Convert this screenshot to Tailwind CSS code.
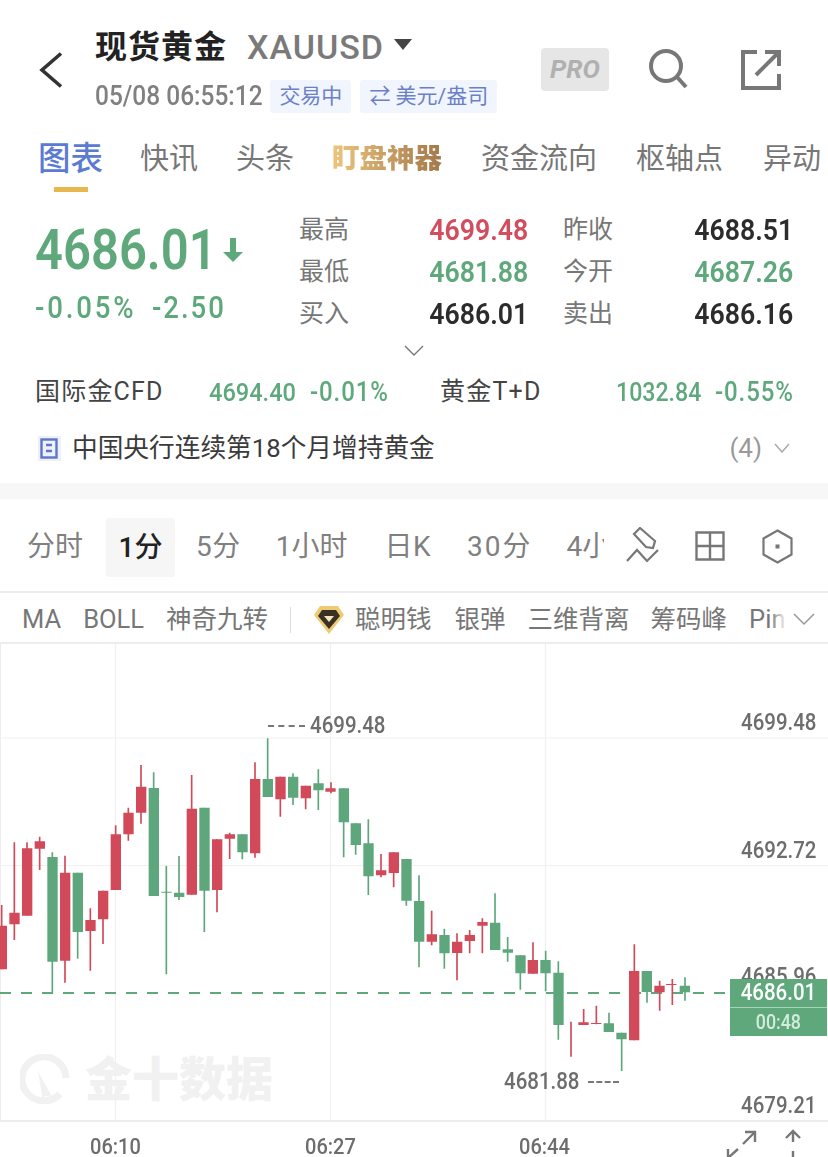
<!DOCTYPE html>
<html lang="zh"><head><meta charset="utf-8">
<script src="https://cdn.jsdelivr.net/npm/@tailwindcss/browser@4"></script>
</head>
<body class="bg-white">
<div class="relative w-[828px] h-[1157px] overflow-hidden bg-white text-[#777] font-['Roboto','Noto_Sans_CJK_SC',sans-serif]">

<!-- header -->
<header class="relative flex h-[125px] pl-[38px] pr-[47px]">
  <svg class="mt-[52px] w-[26px] h-[36px] shrink-0" viewBox="0 0 26 36" fill="none" stroke="#333" stroke-width="3.6"><path d="M23 1.5 4 18l19 16.5"/></svg>
  <div class="ml-[31px] pt-[27px]">
    <div class="flex items-center h-[40px]">
      <span class="text-[32px] leading-none font-bold text-[#222] tracking-[1px]">现货黄金</span>
      <span class="ml-[20px] text-[34px] leading-none font-medium text-[#7a7a7a] tracking-[1px]">XAUUSD</span>
      <svg class="ml-[10px] w-[18px] h-[11px] mb-[5px]" viewBox="0 0 18 11"><path d="M0 0h18L9 11z" fill="#444"/></svg>
    </div>
    <div class="flex items-center mt-[12px] h-[34px]">
      <span class="inline-block origin-left scale-x-[.89] -mr-[21px] text-[27.500px] leading-none font-medium text-[#808080]">05/08 06:55:12</span>
      <span class="ml-[8px] px-[9px] h-[33px] leading-[33px] rounded-[3px] bg-[#f1f5fd] text-[#6b80c9] text-[21px]">交易中</span>
      <span class="ml-[9px] px-[9px] h-[33px] leading-[33px] rounded-[3px] bg-[#f1f5fd] text-[#6b80c9] text-[21px] whitespace-nowrap">⇄ 美元/盎司</span>
    </div>
  </div>
  <div class="ml-auto pt-[48px] flex items-start">
    <div class="w-[68px] h-[43px] rounded-[4px] bg-[#e6e6e6] text-[#b0b0b0] text-[26px] leading-[43px] font-bold italic text-center">PRO</div>
    <svg class="ml-[40px] mt-[1px] w-[40px] h-[40px]" viewBox="0 0 40 40" fill="none" stroke="#777" stroke-width="4"><circle cx="17" cy="17" r="15"/><path d="m28 28 9 10"/></svg>
    <svg class="ml-[52px] mt-[2px] w-[40px] h-[40px]" viewBox="0 0 40 40" fill="none" stroke="#777" stroke-width="4"><path d="M16 2H2v36h36V24M15 25 37 3M24 2h14v14"/></svg>
  </div>
</header>

<!-- tabs -->
<nav class="relative flex items-center h-[68px] pl-[38px] text-[29px] leading-none whitespace-nowrap overflow-hidden">
  <span class="text-[32.500px] font-medium text-[#5b7bd3]">图表</span>
  <span class="ml-[37px]">快讯</span>
  <span class="ml-[38px]">头条</span>
  <span class="ml-[38px] font-black bg-gradient-to-r from-[#ecc67d] to-[#a3784b] bg-clip-text text-transparent text-[27.500px]">盯盘神器</span>
  <span class="ml-[39px]">资金流向</span>
  <span class="ml-[39px]">枢轴点</span>
  <span class="ml-[40px]">异动</span>
  <span class="absolute left-[54px] top-[62px] w-[34px] h-[5px] bg-[#e8b84f]"></span>
</nav>

<!-- quote -->
<section class="relative flex h-[178px] pl-[35px] pr-[35px] pt-[16px]">
  <div class="w-[264px] pt-[11px] text-[#5ea87c]">
    <div class="flex items-center h-[60px]">
      <span class="inline-block origin-left scale-x-[.89] -mr-[22px] text-[55px] leading-none font-semibold">4686.01</span>
      <svg class="ml-[5px] w-[22px] h-[24px]" viewBox="0 0 22 24"><path d="M8 0h6v14h7L11 24 1 14h7z" fill="#5ea87c"/></svg>
    </div>
    <div class="mt-[12px] text-[31px] leading-none font-medium whitespace-nowrap">
      <span class="inline-block origin-left scale-x-[.89] tracking-[3.200px] -mr-[17px]">-0.05%</span><span class="inline-block origin-left scale-x-[.89] tracking-[2.200px] ml-[20px]">-2.50</span>
    </div>
  </div>
  <div class="grid grid-cols-[100px_129px_90px_175px] grid-rows-[42px_42px_42px] items-center text-[25px] w-[494px] h-[126px]">
    <span>最高</span><span class="justify-self-end inline-block origin-right scale-x-[.89] font-semibold text-[30px] leading-none text-[#d24d5e]">4699.48</span>
    <span class="pl-[35px] whitespace-nowrap">昨收</span><span class="justify-self-end inline-block origin-right scale-x-[.89] font-semibold text-[30px] leading-none text-[#2c2c2c]">4688.51</span>
    <span>最低</span><span class="justify-self-end inline-block origin-right scale-x-[.89] font-semibold text-[30px] leading-none text-[#5ea87c]">4681.88</span>
    <span class="pl-[35px] whitespace-nowrap">今开</span><span class="justify-self-end inline-block origin-right scale-x-[.89] font-semibold text-[30px] leading-none text-[#5ea87c]">4687.26</span>
    <span>买入</span><span class="justify-self-end inline-block origin-right scale-x-[.89] font-semibold text-[30px] leading-none text-[#2c2c2c]">4686.01</span>
    <span class="pl-[35px] whitespace-nowrap">卖出</span><span class="justify-self-end inline-block origin-right scale-x-[.89] font-semibold text-[30px] leading-none text-[#2c2c2c]">4686.16</span>
  </div>
  <svg class="absolute left-[404px] top-[152px] w-[20px] h-[11px]" viewBox="0 0 20 11" fill="none" stroke="#777" stroke-width="1.4"><path d="m1 1 9 9 9-9"/></svg>
</section>

<!-- related -->
<section class="flex items-center h-[50px] -mt-[4px] pl-[35px] whitespace-nowrap">
  <span class="w-[174px] text-[25px] text-[#444] tracking-[1.200px]">国际金CFD</span>
  <span class="w-[101px]"><span class="inline-block origin-left scale-x-[.89] text-[#5ea87c] text-[26.500px] font-medium">4694.40</span></span>
  <span class="w-[130px]"><span class="inline-block origin-left scale-x-[.89] text-[#5ea87c] text-[27px] font-medium tracking-[1px]">-0.01%</span></span>
  <span class="w-[176px] text-[25px] text-[#444] tracking-[1.200px]">黄金T+D</span>
  <span class="w-[99px]"><span class="inline-block origin-left scale-x-[.89] text-[#5ea87c] text-[26px] font-medium">1032.84</span></span>
  <span><span class="inline-block origin-left scale-x-[.89] text-[#5ea87c] text-[27px] font-medium tracking-[1px]">-0.55%</span></span>
</section>

<!-- news -->
<section class="flex items-center h-[50px] mt-[6px] pl-[38px] pr-[38px] whitespace-nowrap">
  <svg class="w-[23px] h-[25px]" viewBox="0 0 23 25"><rect width="23" height="25" fill="#eef1fb"/><rect x="3.5" y="3.5" width="15" height="18" fill="none" stroke="#5c76c9" stroke-width="2.4"/><path d="M8 9h6M8 15h6" stroke="#5c76c9" stroke-width="2.6"/></svg>
  <span class="ml-[11px] text-[25.700px] text-[#3b3b3b]">中国央行连续第18个月增持黄金</span>
  <span class="ml-auto text-[26px] text-[#999]">(4)</span>
  <svg class="ml-[12px] w-[16px] h-[10px]" viewBox="0 0 16 10" fill="none" stroke="#aaa" stroke-width="1.5"><path d="m1 1 7 8 7-8"/></svg>
</section>

<div class="h-[16px] mt-[10px] bg-[#f7f7f7]"></div>

<!-- periods -->
<section class="relative flex items-center h-[94px] pt-[4px] border-b-2 border-[#ededed] pl-[27px] text-[28px] text-[#808080] whitespace-nowrap">
  <span>分时</span>
  <span class="ml-[23px] w-[69px] h-[59px] leading-[59px] text-center rounded-[3px] bg-[#f6f6f6] text-[#222] font-medium">1分</span>
  <span class="ml-[21px] tracking-[.5px]">5分</span>
  <span class="ml-[35px]">1小时</span>
  <span class="ml-[37px] tracking-[.5px]">日K</span>
  <span class="ml-[36px] tracking-[2px]">30分</span>
  <span class="ml-[34px] w-[37px] overflow-hidden">4小时</span>
  <svg class="absolute left-[626px] top-[28px] w-[34px] h-[37px]" viewBox="0 0 34 37" fill="none" stroke="#777" stroke-width="2.2"><path d="m14 1 15 13-2 7-7-1L8 7zM1 34l10-11 10 11 11-11"/></svg>
  <svg class="absolute left-[695px] top-[32px] w-[30px] h-[30px]" viewBox="0 0 30 30" fill="none" stroke="#777" stroke-width="2.4"><path d="M1.500 1.500h27v27h-27zM15 1.500v27M1.500 15h27"/></svg>
  <svg class="absolute left-[762px] top-[30px] w-[31px] h-[35px]" viewBox="0 0 31 35" fill="none" stroke="#777" stroke-width="2.200"><path d="M15.500 1.500 29.500 9.500v16l-14 8-14-8v-16z"/><rect x="13.500" y="15.500" width="4" height="4" fill="#777" stroke="none"/></svg>
</section>

<!-- indicators -->
<section class="relative flex items-center h-[51px] pt-[4px] border-b-2 border-[#ededed] pl-[22px] text-[25.500px] text-[#777] whitespace-nowrap overflow-hidden">
  <span>MA</span>
  <span class="ml-[22px]">BOLL</span>
  <span class="ml-[22px]">神奇九转</span>
  <span class="ml-[22px] w-px h-[26px] bg-[#ddd]"></span>
  <svg class="ml-[22px] w-[32px] h-[30px] shrink-0" viewBox="0 0 32 30"><path d="M7 1h18l6 9-15 19L1 10z" fill="#eccb72"/><path d="M9 5h14l4 6-11 13L5 11z" fill="#3a3126"/><path d="M11 11h10l-5 6z" fill="#f5e6bd"/></svg>
  <span class="ml-[10px]">聪明钱</span>
  <span class="ml-[23px]">银弹</span>
  <span class="ml-[22px]">三维背离</span>
  <span class="ml-[21px]">筹码峰</span>
  <span class="ml-[22px]">Pin</span>
  <span class="absolute left-[770px] top-0 w-[58px] h-[49px] bg-gradient-to-r from-white/0 via-white via-30% to-white"></span>
  <svg class="absolute left-[793px] top-[20px] w-[22px] h-[13px]" viewBox="0 0 22 13" fill="none" stroke="#999" stroke-width="1.500"><path d="m1 1 10 10L21 1"/></svg>
</section>

<!-- chart -->
<section class="relative h-[478px] border-l border-b-2 border-[#ededed]">
  <!-- watermark -->
  <div class="absolute left-[19px] top-[410px] flex items-center text-[#f1f1f1] font-black text-[47px] leading-none">
    <svg class="w-[50px] h-[50px]" viewBox="0 0 50 50" fill="none"><path d="M40 40A22 22 0 1 1 46 24" stroke="#f1f1f1" stroke-width="7"/><path d="m18 17 14 26-7-1-2 6z" fill="#f1f1f1"/></svg>
    <span class="ml-[15px]">金十数据</span>
  </div>
  <svg class="absolute -left-px -top-[644px] w-[828px] h-[1157px]" viewBox="0 0 828 1157" fill="none">
    <path d="M0 738H828M0 865.500H828M115.500 644V1121M330.500 644V1121M545.500 644V1121" stroke="#f0f0f0" stroke-width="1.200"/>
    <path d="M0 993H730" stroke="#5ea87c" stroke-width="1.800" stroke-dasharray="11 10"/>
    <g transform="translate(0 720) scale(.33333)">
      <path stroke="#d24a59" stroke-width="5" d="M5 555V748M43 367V660M81 367V587M119 350V450M195 407V788M271 565V752M309 512V672M347 316V510M385 263V362M423 135V311M575 165V524M651 358V577M689 338V417M765 127V413M841 170V290M917 197V268M993 187V220"/>
      <path stroke="#5ea67c" stroke-width="5" d="M157 397V820M233 458V716M461 157V528M499 438V763M537 408V540M613 263V636M727 343V418M803 55V231M879 160V255M955 148V270M1031 205V412"/>
      <path fill="#d24a59" d="M0 617H21V748H0zM28 578h31V613H28zM66 385h31V587H66zM104 364h31V386H104zM180 458h31V722H180zM256 600h31V633H256zM294 512h31V598H294zM332 343h31V510H332zM370 278h31V343H370zM408 200h31V278H408zM560 266h31V524H560zM636 358h31V510H636zM674 343h31V356H674zM750 177h31V400H750zM826 170h31V238H826zM902 197h31V235H902zM976 205h31V215H976z"/>
      <path fill="#5ea67c" d="M142 411h31V725H142zM218 458h31V636H218zM446 204h31V528H446zM484 515h31V518H484zM522 518h31V531H522zM598 263h31V512H598zM712 343h31V397H712zM788 177h31V231H788zM864 170h31V233H864zM940 190h31V211H940zM1016 205h31V307H1016z"/>
    </g>
    <g transform="translate(330 760) scale(.33333)">
      <path stroke="#d24a59" stroke-width="5" d="M153 282V352M191 277V382M305 452V556M381 520V661M419 510V580M457 475V580M609 547V641M723 785V890M761 747V795M799 737V793M913 553V841M989 662V752M1027 657V735"/>
      <path stroke="#5ea67c" stroke-width="5" d="M77 190V284M115 178V405M229 297V437M267 346V622M343 506V626M495 400V570M533 531V605M571 586V689M647 572V694M685 604V839M837 758V816M875 818V933M951 633V728M1065 652V722"/>
      <path fill="#d24a59" d="M138 331h31V346H138zM176 277h31V339H176zM290 523h31V545H290zM366 545h31V579H366zM404 525h31V543H404zM442 486h31V497H442zM593 600h31V641H593zM745 787h31V795H745zM783 789h31V792H783zM897 633h31V841H897zM973 677h31V697H973zM1008 672h31V675H1008z"/>
      <path fill="#5ea67c" d="M62 190h31V255H62zM100 250h31V349H100zM214 297h31V422H214zM252 423h31V545H252zM328 525h31V580H328zM480 488h31V570H480zM518 568h31V578H518zM556 586h31V640H556zM631 600h31V640H631zM670 638h31V795H670zM821 790h31V816H821zM859 818h31V838H859zM935 633h31V696H935zM1049 677h31V697H1049z"/>
    </g>
  </svg>
  <div class="text-[#6d6d6d] text-[23px] font-medium leading-none">
    <span class="absolute left-[267px] top-[70px] flex items-center"><span class="w-[37px] border-t-2 border-dashed border-[#777]"></span><span class="ml-[5px] inline-block origin-left scale-x-[.89]">4699.48</span></span>
    <span class="absolute left-[503px] top-[426px] flex items-center w-[115px]"><span class="inline-block origin-left scale-x-[.89]">4681.88</span><span class="absolute left-[84px] w-[31px] border-t-2 border-dashed border-[#777]"></span></span>
    <span class="absolute left-[740px] top-[67px] inline-block origin-left scale-x-[.89]">4699.48</span>
    <span class="absolute left-[740px] top-[195px] inline-block origin-left scale-x-[.89]">4692.72</span>
    <span class="absolute left-[740px] top-[321px] inline-block origin-left scale-x-[.89]">4685.96</span>
    <span class="absolute left-[740px] top-[450px] inline-block origin-left scale-x-[.89]">4679.21</span>
  </div>
  <div class="absolute left-[729px] top-[335px] w-[97px] h-[57px] bg-[#5ea87c] text-white text-center font-medium leading-none">
    <div class="h-[29px] border-b border-[#a8d3b8] text-[23px] leading-[28px]"><span class="inline-block scale-x-[.89]">4686.01</span></div>
    <div class="text-[20px] leading-[28px] text-[#d5ecdd]"><span class="inline-block scale-x-[.89]">00:48</span></div>
  </div>
</section>

<!-- time axis -->
<footer class="relative h-[35px] text-[#6d6d6d] text-[22.500px] font-medium leading-none">
  <span class="absolute left-[90px] top-[13px] inline-block origin-left scale-x-[.89]">06:10</span>
  <span class="absolute left-[305px] top-[13px] inline-block origin-left scale-x-[.89]">06:27</span>
  <span class="absolute left-[519px] top-[13px] inline-block origin-left scale-x-[.89]">06:44</span>
  <svg class="absolute left-[725px] top-[6px] w-[32px] h-[30px]" viewBox="0 0 32 30" fill="none" stroke="#777" stroke-width="2.400"><path d="M20 4h10v10M30 4 18 16M3 30 13 21M3 21v9"/></svg>
  <svg class="absolute left-[784px] top-[6px] w-[18px] h-[30px]" viewBox="0 0 18 30" fill="none" stroke="#777" stroke-width="2.400"><path d="M2 10l7-7 7 7M9 3v11M9 23v7"/></svg>
</footer>
</div>
</body></html>
